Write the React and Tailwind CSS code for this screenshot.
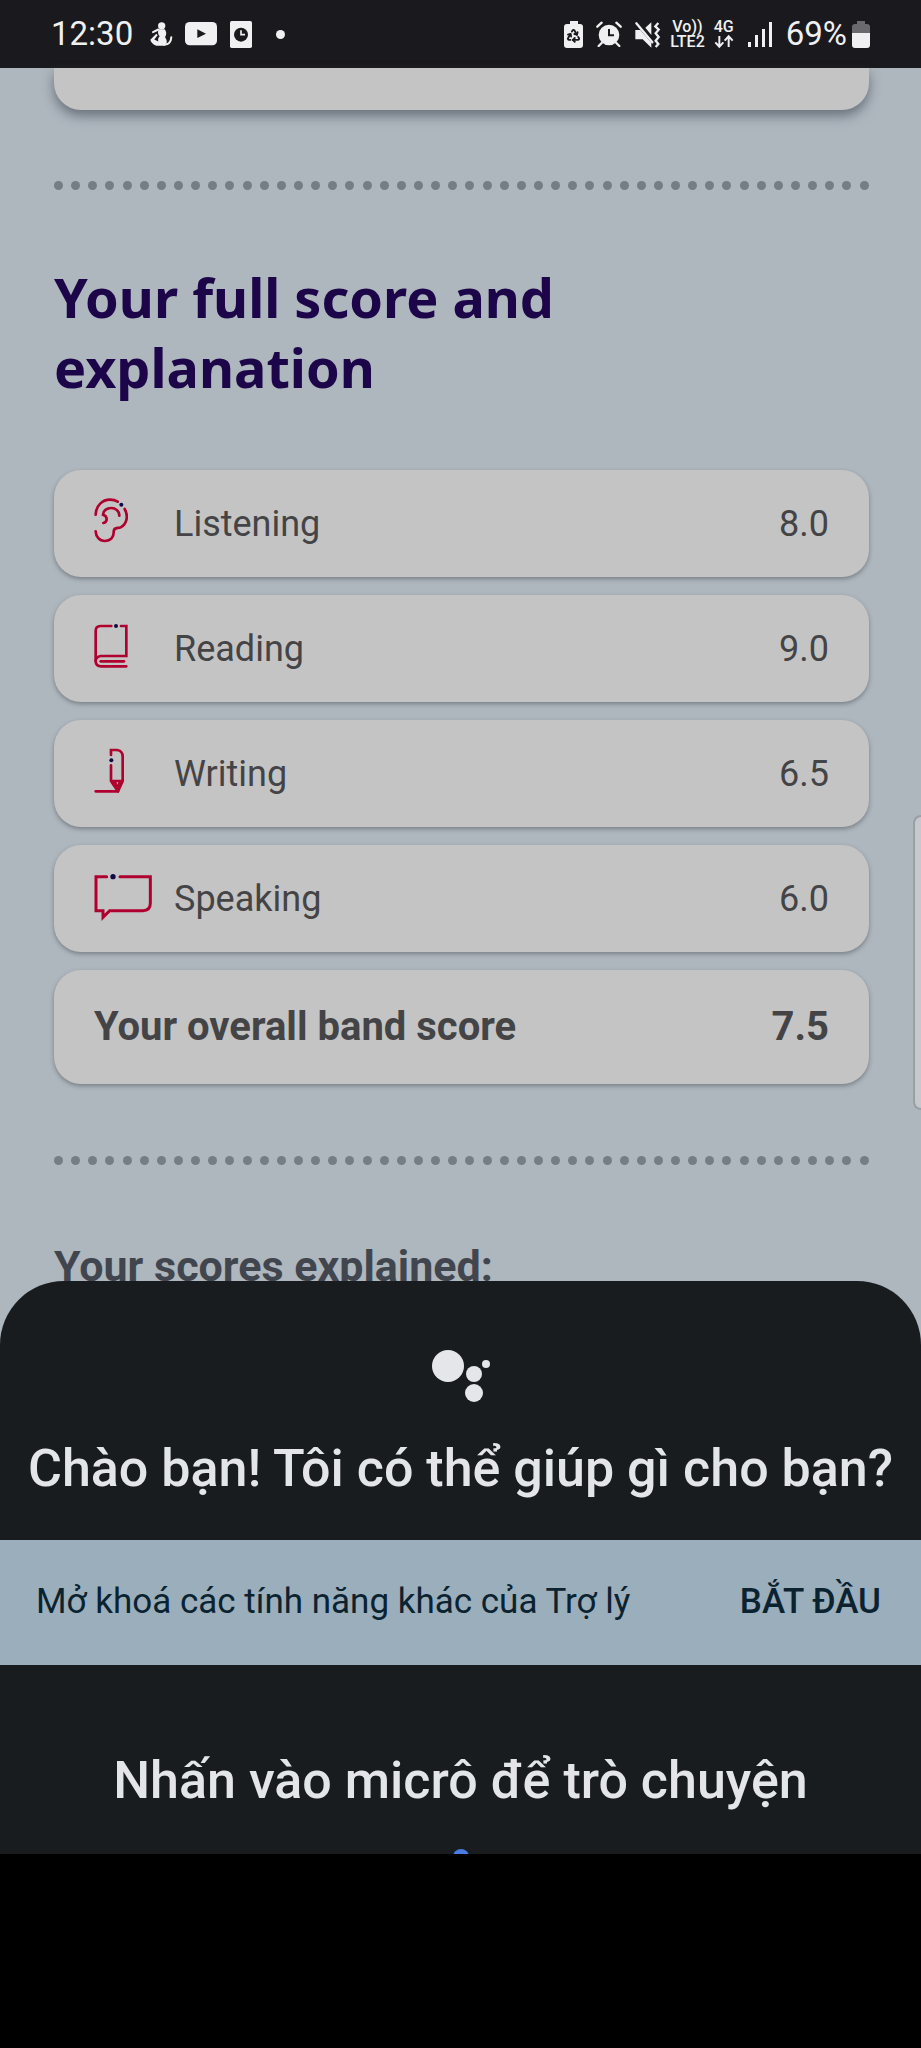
import React from 'react'
import { Recycle } from 'lucide-react'

function EarIcon() {
  return (
    <svg className="w-[34px] h-12" viewBox="0 0 102 144" fill="none" stroke="#b0002f" strokeWidth="8" strokeLinecap="round">
      <path d="M5 50C6 22 26 5 48 5c9 0 17 2 23 6" />
      <path d="M92 33c11 19 8 45-12 55-8 4-20-2-21 12 1 18-9 29-27 29-16 0-26-13-27-29" />
      <path d="M76 53c0-15-12-23-24-23-14 0-25 8-25 20 7 2 11 7 11 13 0 7-4 11-10 12" />
      <circle cx="82" cy="20" r="6" fill="#120a45" stroke="none" />
    </svg>
  )
}

function BookIcon() {
  return (
    <svg className="w-[34px] h-12" viewBox="0 0 102 144" fill="none" stroke="#b0002f" strokeWidth="8" strokeLinecap="round">
      <path d="M52 9H20Q5 9 5 24v90q0 16 17 16h75" />
      <path d="M81 9h16v90H20Q6 101 5 114" />
      <path d="M20 115h70" />
      <circle cx="66" cy="9" r="6" fill="#120a45" stroke="none" />
    </svg>
  )
}

function PenIcon() {
  return (
    <svg className="w-[34px] h-12" viewBox="0 0 102 144" fill="none" stroke="#b0002f" strokeWidth="8" strokeLinecap="round">
      <path d="M51 21V6h18q17 2 17 20v73l-14 31H5" />
      <path d="M51 52v47l21 31M51 99h35M62 101l9 19 7-19" />
      <circle cx="52" cy="37" r="6" fill="#120a45" stroke="none" />
    </svg>
  )
}

function SpeechIcon() {
  return (
    <svg className="w-[58px] h-12" viewBox="0 0 174 144" fill="none" stroke="#b0002f" strokeWidth="9" strokeLinecap="round">
      <path d="M38 11H6v102h21v20l20-20h100q22 0 22-22V11H78" />
      <circle cx="57" cy="11" r="8" fill="#120a45" stroke="none" />
    </svg>
  )
}

const scores = [
  { label: 'Listening', value: '8.0', Icon: EarIcon },
  { label: 'Reading', value: '9.0', Icon: BookIcon },
  { label: 'Writing', value: '6.5', Icon: PenIcon },
  { label: 'Speaking', value: '6.0', Icon: SpeechIcon },
]

function DottedLine({ className }) {
  return (
    <div className={`flex justify-between ${className}`}>
      {Array.from({ length: 48 }, (_, i) => (
        <span key={i} className="size-[9px] rounded-full bg-[#757d85]" />
      ))}
    </div>
  )
}

function StatusBar() {
  return (
    <header className="h-[68px] shrink-0 bg-[#1a1a1e] text-[#f0f0f2] flex items-center justify-between pl-[51px] pr-[51px]">
      <div className="flex items-center">
        <span className="text-[33px] leading-10">12:30</span>
        <svg className="w-[24px] h-[27px] ml-[16px]" viewBox="0 0 72 80" fill="currentColor">
          <circle cx="38" cy="14" r="11" />
          <path d="M29 24h18c8 10 4 18 1 24 8 10 6 18 0 26H22C12 70 6 64 4 56l18-18 4 4-10 13 12 6c-2-8 0-12 4-16-6-6-6-14-3-21z" />
          <path d="M12 33l16-8" stroke="currentColor" strokeWidth="6" strokeLinecap="round" />
          <path d="M44 70c14 2 22-6 23-22" stroke="currentColor" strokeWidth="6" strokeLinecap="round" fill="none" />
        </svg>
        <svg className="w-[32px] h-[24px] ml-[12px]" viewBox="0 0 96 72">
          <rect width="96" height="70" rx="14" fill="currentColor" />
          <path d="M37 22l26 13-26 13z" fill="#1a1a1e" />
        </svg>
        <svg className="w-[22px] h-[27px] ml-[13px]" viewBox="0 0 66 81">
          <rect width="66" height="81" rx="5" fill="currentColor" />
          <circle cx="33" cy="41" r="21" fill="#1a1a1e" />
          <path d="M33 28v13h12" stroke="currentColor" strokeWidth="5" fill="none" />
        </svg>
        <span className="size-[9px] rounded-full bg-current ml-[24px]" />
      </div>

      <div className="flex items-center">
        <div className="flex flex-col items-center">
          <span className="w-2 h-[3px] bg-current" />
          <span className="w-[19px] h-6 rounded-[3px] bg-current flex items-center justify-center">
            <Recycle className="size-[15px] text-[#1a1a1e]" strokeWidth={3} />
          </span>
        </div>
        <svg className="size-[26px] ml-[13px]" viewBox="0 0 78 78">
          <circle cx="39" cy="42" r="31" fill="currentColor" />
          <path d="M4 17L17 5M74 17L61 5M17 66l-9 9M61 66l9 9" stroke="currentColor" strokeWidth="7" strokeLinecap="round" />
          <path d="M39 24v19h15" stroke="#1a1a1e" strokeWidth="6" fill="none" />
        </svg>
        <svg className="w-[27px] h-[27px] ml-[12px]" viewBox="0 0 81 81">
          <path d="M4 27h15l33 38v15L26 55H4zM34 20L52 4v38z" fill="currentColor" />
          <path d="M7 7l48 57" stroke="currentColor" strokeWidth="7" strokeLinecap="round" />
          <path d="M73 6l-9 10 10 10-9 11 9 11-9 11 8 10-8 9" stroke="currentColor" strokeWidth="7" fill="none" />
        </svg>
        <div className="flex flex-col items-center ml-[9px] text-[16px] leading-[15px] font-medium">
          <span>Vo))</span>
          <span>LTE2</span>
        </div>
        <div className="flex flex-col items-center ml-[9px] text-[16px] leading-[15px] font-medium">
          <span>4G</span>
          <svg className="w-[20px] h-[15px]" viewBox="0 0 60 45" fill="none" stroke="currentColor" strokeWidth="6">
            <path d="M16 6v31M4 25l12 13 12-13M44 39V8M32 20L44 7l12 13" />
          </svg>
        </div>
        <div className="flex items-end gap-[4px] ml-[14px]">
          <span className="w-[3px] h-[5px] bg-current" />
          <span className="w-[3px] h-[12px] bg-current" />
          <span className="w-[3px] h-[18px] bg-current" />
          <span className="w-[3px] h-[25px] bg-current" />
        </div>
        <span className="text-[33px] leading-10 ml-[14px]">69%</span>
        <div className="flex flex-col items-center ml-[5px]">
          <span className="w-2 h-[3px] bg-[#6a6a6e]" />
          <span className="w-[18px] h-[9px] rounded-t-[3px] bg-[#6a6a6e]" />
          <span className="w-[18px] h-[15px] rounded-b-[3px] bg-current" />
        </div>
      </div>
    </header>
  )
}

export default function App() {
  return (
    <div className="relative min-h-screen bg-black flex flex-col font-[Roboto,sans-serif]">
      <StatusBar />

      <main className="bg-[#aeb6be] pl-[54px] pr-[52px] pb-[55px] text-[#444446]">
        <div className="h-[42px] rounded-b-[27px] bg-[#c4c4c4] shadow-[0_6px_12px_rgba(60,70,80,0.6)]" />

        <DottedLine className="mt-[71px]" />

        <h1 className="mt-[72px] max-w-[640px] text-[54px] leading-[70px] font-bold text-[#1d0549] font-['Noto_Sans',sans-serif]">
          Your full score and explanation
        </h1>

        <ul className="mt-[68px] flex flex-col gap-[18px]">
          {scores.map(({ label, value, Icon }) => (
            <li key={label} className="h-[107px] rounded-[27px] bg-[#c4c4c4] shadow-[0_2px_4px_rgba(70,75,80,0.5)] px-10 flex items-center text-[36px]">
              <span className="w-20 shrink-0 pb-[3px]"><Icon /></span>
              <span className="flex-1">{label}</span>
              <span>{value}</span>
            </li>
          ))}
          <li className="h-[114px] rounded-[27px] bg-[#c4c4c4] shadow-[0_2px_4px_rgba(70,75,80,0.5)] px-10 flex items-center justify-between text-[40px] font-bold">
            <span>Your overall band score</span>
            <span>7.5</span>
          </li>
        </ul>

        <DottedLine className="mt-[72px]" />

        <h2 className="mt-[77px] text-[43px] leading-12 font-bold text-[#41464e]">Your scores explained:</h2>
      </main>

      {/* Edge panel handle */}
      <div className="absolute right-0 top-[815px] w-2 h-[295px] rounded-l-lg bg-[#c5c9cd] border-2 border-r-0 border-[#9a9fa4]" />

      <section className="relative -mt-16 rounded-t-[64px] bg-[#191c1f] text-[#e3e5e8] flex flex-col items-center overflow-hidden">
        <svg className="mt-[68px] w-[60px] h-[54px] fill-[#e4e6e9]" viewBox="0 0 60 54">
          <circle cx="17" cy="17" r="16" />
          <circle cx="43" cy="25" r="8" />
          <circle cx="55" cy="15" r="4" />
          <circle cx="43" cy="44" r="9" />
        </svg>
        <p className="mt-[34px] text-[52px] leading-[64px] font-medium whitespace-nowrap">
          Chào bạn! Tôi có thể giúp gì cho bạn?
        </p>
        <div className="mt-[39px] self-stretch h-[125px] pl-9 pr-10 bg-[#9aaebb] text-[#0b2230] flex items-center justify-between">
          <span className="text-[35px]">Mở khoá các tính năng khác của Trợ lý</span>
          <button className="text-[35px] font-medium">BẮT ĐẦU</button>
        </div>
        <p className="mt-[84px] text-[52px] leading-[64px] font-medium">Nhấn vào micrô để trò chuyện</p>
        <div className="mt-[36px] h-[5px] overflow-hidden">
          <span className="block size-4 rounded-full bg-[#4a7be0]" />
        </div>
      </section>
    </div>
  )
}
